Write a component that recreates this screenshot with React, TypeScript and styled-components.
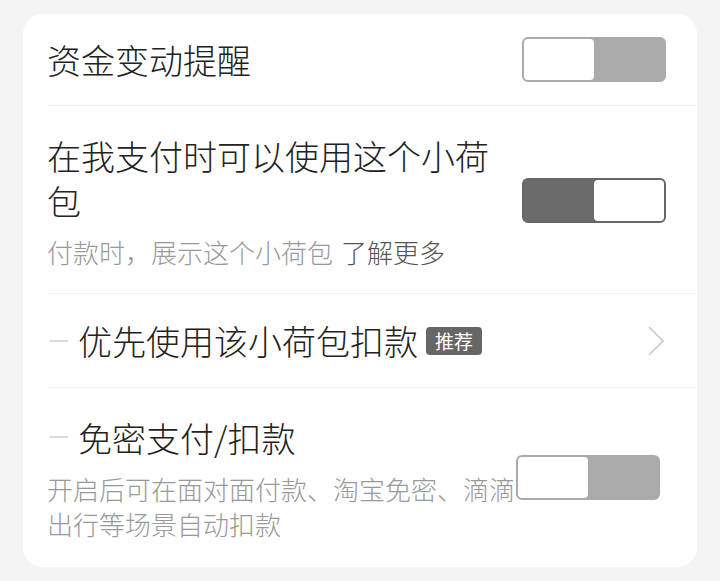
import { FC } from "react";
import styled, { createGlobalStyle } from "styled-components";

const GlobalStyle = createGlobalStyle`
  html, body {
    margin: 0;
    padding: 0;
    background: #f4f4f4;
  }
  body {
    font-family: "Noto Sans CJK SC", "Noto Sans", sans-serif;
  }
`;

const Page = styled.div`
  width: 720px;
  height: 581px;
  padding: 14px 23px 0;
  box-sizing: border-box;
  background: #f4f4f4;
`;

const Card = styled.div`
  background: #ffffff;
  border-radius: 20px;
  padding-left: 24px;
  height: 553px;
  box-sizing: border-box;
  overflow: hidden;
`;

const Row = styled.div<{ $min: number }>`
  display: flex;
  align-items: center;
  justify-content: space-between;
  min-height: ${(p) => p.$min}px;
  box-sizing: border-box;
  padding-right: 31px;
  border-bottom: 1px solid #f0f0f0;

  &:last-child {
    border-bottom: none;
  }
`;

const TextCol = styled.div<{ $width?: number }>`
  display: flex;
  flex-direction: column;
  ${(p) => (p.$width ? `width: ${p.$width}px;` : "")}
`;

const Title = styled.div`
  font-size: 34px;
  font-weight: 300;
  line-height: 45px;
  color: #222;
  display: flex;
  align-items: center;
  max-width: 460px;
`;

const Sub = styled.div`
  font-size: 26px;
  font-weight: 300;
  line-height: 35px;
  color: #999;
  margin-top: 11px;
`;

const More = styled.span`
  color: #555;
  margin-left: 8px;
`;

const Dash = styled.span`
  display: inline-block;
  width: 18px;
  height: 2px;
  background: #d9d9d9;
  margin: 0 10px 0 3px;
`;

const Badge = styled.span`
  display: inline-flex;
  align-items: center;
  height: 28px;
  padding: 0 9px;
  margin-left: 8px;
  background: #666;
  color: #fff;
  border-radius: 4px;
  font-size: 19px;
  font-weight: 400;
  line-height: 28px;
`;

const Track = styled.div<{ $on: boolean }>`
  flex: none;
  width: 144px;
  height: 45px;
  border-radius: 6px;
  box-sizing: border-box;
  background: ${(p) => (p.$on ? "#6b6b6b" : "#aaaaaa")};
  border: 2px solid ${(p) => (p.$on ? "#666" : "#aaa")};
  display: flex;
  justify-content: ${(p) => (p.$on ? "flex-end" : "flex-start")};
`;

const Knob = styled.div`
  width: 70px;
  height: 100%;
  background: #fff;
  border-radius: 4px;
`;

const Toggle: FC<{ on?: boolean }> = ({ on = false }) => (
  <Track $on={on}>
    <Knob />
  </Track>
);

const Chevron = () => (
  <svg width="20" height="32" viewBox="0 0 20 32" fill="none">
    <polyline points="3,2 17,16 3,30" stroke="#c8c8c8" strokeWidth="1.6" />
  </svg>
);

const App: FC = () => (
  <Page>
    <GlobalStyle />
    <Card>
      <Row $min={92}>
        <Title>资金变动提醒</Title>
        <Toggle />
      </Row>
      <Row $min={188} style={{ paddingTop: 26, paddingBottom: 24 }}>
        <TextCol>
          <Title>在我支付时可以使用这个小荷包</Title>
          <Sub>
            付款时，展示这个小荷包<More>了解更多</More>
          </Sub>
        </TextCol>
        <Toggle on />
      </Row>
      <Row $min={94}>
        <Title>
          <Dash />
          优先使用该小荷包扣款
          <Badge>推荐</Badge>
        </Title>
        <Chevron />
      </Row>
      <Row $min={179} style={{ justifyContent: "flex-start" }}>
        <TextCol $width={469}>
          <Title>
            <Dash />
            免密支付/扣款
          </Title>
          <Sub>开启后可在面对面付款、淘宝免密、滴滴出行等场景自动扣款</Sub>
        </TextCol>
        <Toggle />
      </Row>
    </Card>
  </Page>
);

export default App;
